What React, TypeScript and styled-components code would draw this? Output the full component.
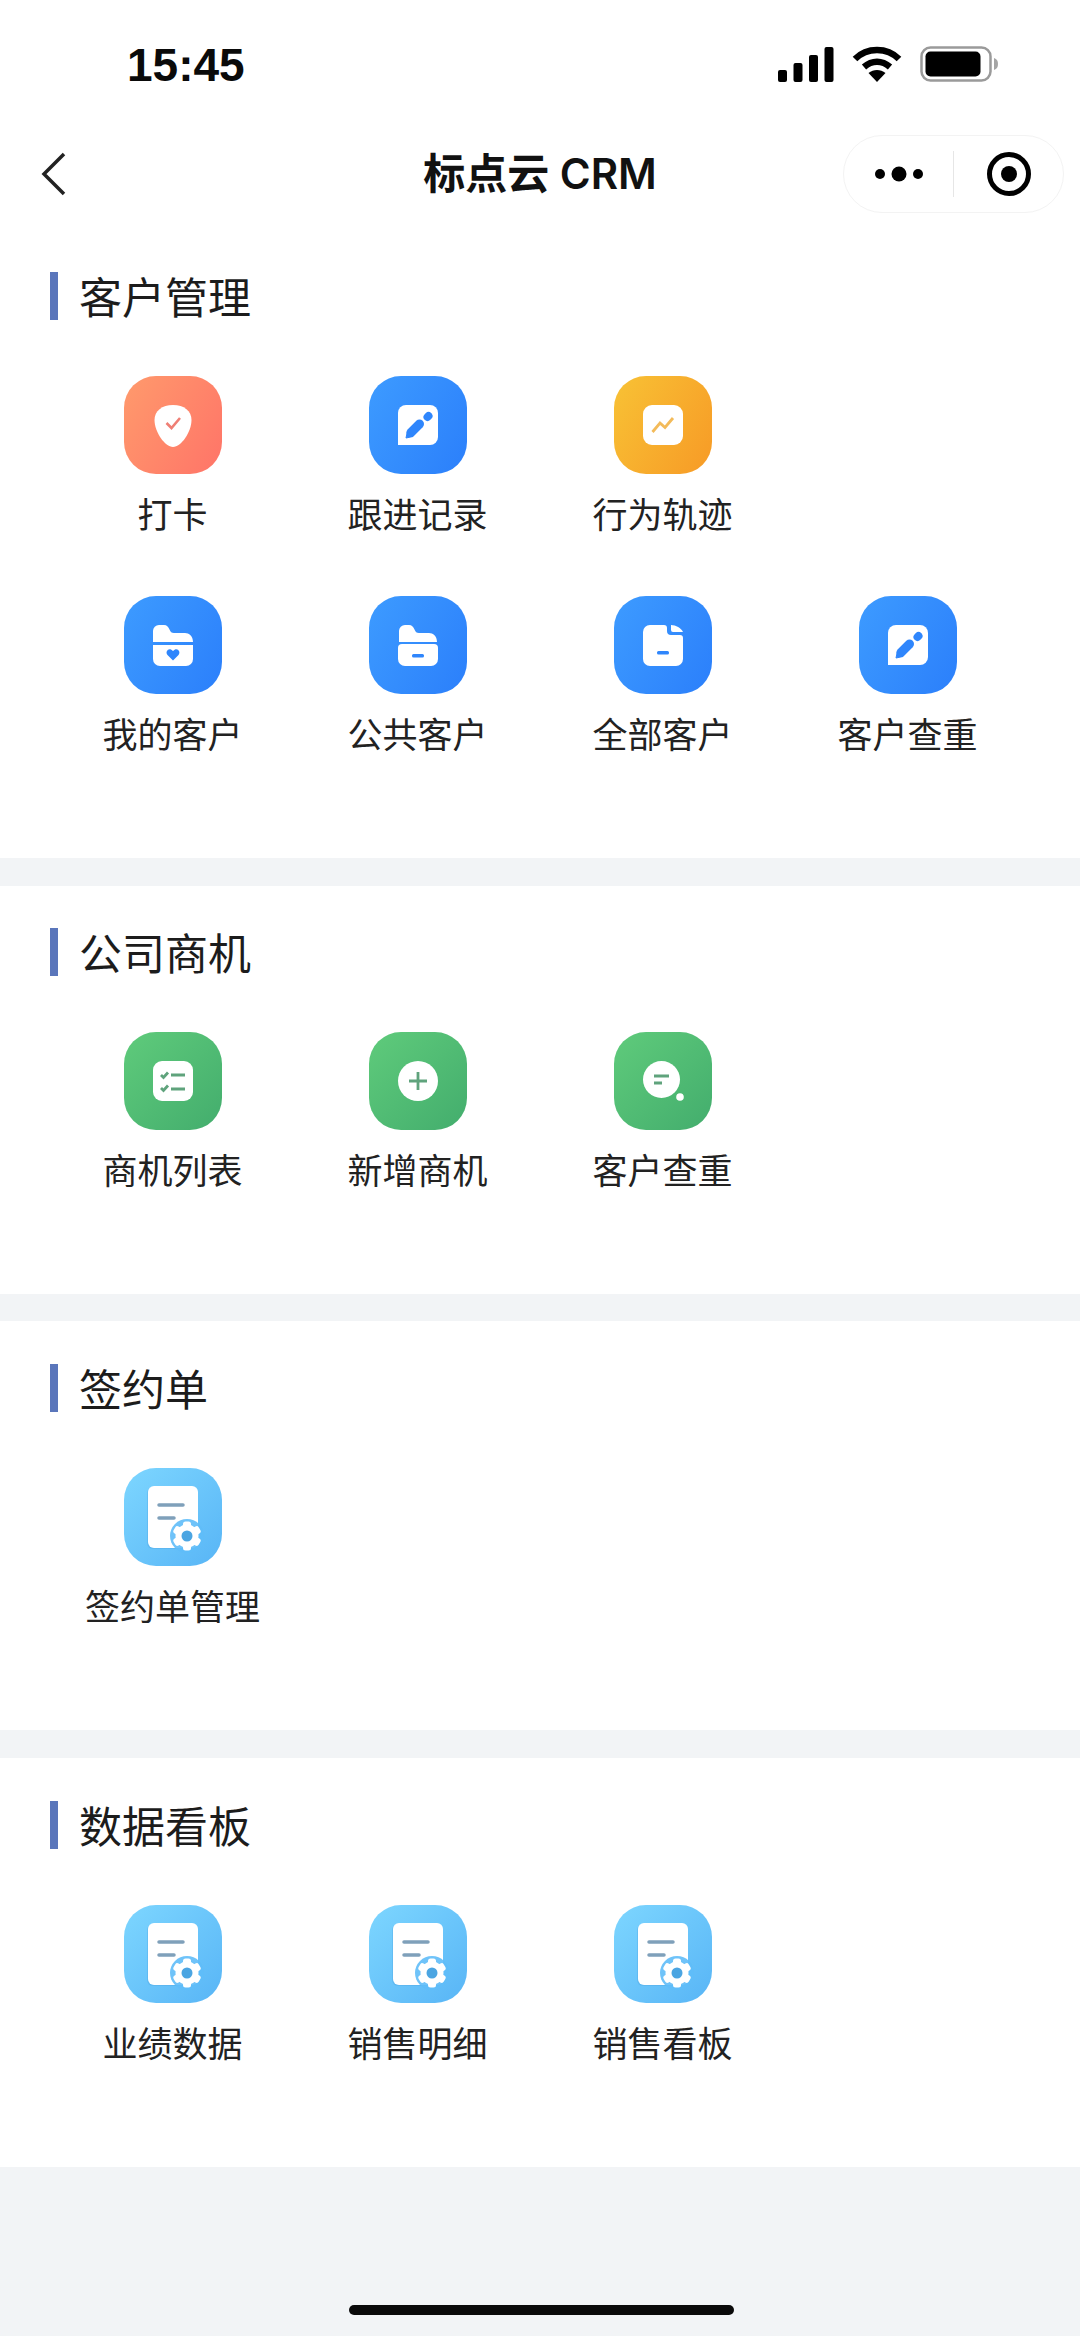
import React from "react";
import styled, { createGlobalStyle } from "styled-components";

const Global = createGlobalStyle`
  html, body { margin: 0; padding: 0; background: #f2f4f6; }
  body { font-family: "Liberation Sans", "Noto Sans CJK SC", sans-serif; }
`;

const Page = styled.div`
  position: relative;
  width: 1080px;
  min-height: 2336px;
  background: #f2f4f6;
  overflow: hidden;
`;

const Head = styled.header`
  background: #fff;
`;

const StatusBar = styled.div`
  height: 120px;
  display: flex;
  align-items: flex-start;
  justify-content: space-between;
  padding: 42px 82px 0 127px;
  box-sizing: border-box;
`;

const Clock = styled.span`
  font-size: 46px;
  line-height: 46px;
  font-weight: 700;
  color: #0a0a0a;
`;

const StatusIcons = styled.div`
  display: flex;
  align-items: center;
  gap: 18px;
  margin-top: 4px;
`;

const NavBar = styled.nav`
  height: 108px;
  display: grid;
  grid-template-columns: 1fr auto 1fr;
  align-items: center;
  padding: 0 16px 0 40px;
  box-sizing: border-box;
`;

const BackButton = styled.div`
  display: flex;
  align-items: center;
`;

const NavTitle = styled.h1`
  margin: 0 0 0 -24px;
  font-size: 42px;
  line-height: 56px;
  font-weight: 600;
  color: #111;
  font-family: "Inter", "Noto Sans CJK SC", sans-serif;
  white-space: nowrap;
`;

const Capsule = styled.div`
  justify-self: end;
  width: 221px;
  height: 78px;
  border-radius: 39px;
  border: 1px solid #f3f3f3;
  background: #fff;
  box-sizing: border-box;
  display: grid;
  grid-template-columns: 1fr 1px 1fr;
  align-items: center;
  justify-items: center;
`;

const CapsuleRule = styled.div`
  width: 1px;
  height: 46px;
  background: #e6e6e6;
`;

const Section = styled.section<{ $top: number }>`
  background: #fff;
  padding: ${(p) => p.$top}px 0 101px;
  margin-bottom: 27.5px;
`;

const Heading = styled.h2`
  margin: 0 0 56px 50px;
  height: 48px;
  border-left: 8px solid #5a76bb;
  padding-left: 21px;
  font-size: 43px;
  line-height: 46px;
  font-weight: 400;
  color: #1c1c1c;
  font-family: "Noto Sans CJK SC", sans-serif;
`;

const Grid = styled.div`
  display: grid;
  grid-template-columns: repeat(4, 245px);
  row-gap: 59px;
  padding-left: 50px;
`;

const Item = styled.div`
  display: flex;
  flex-direction: column;
  align-items: center;
  gap: 15px;
`;

const Tile = styled.div<{ $kind: Kind }>`
  width: 98px;
  height: 98px;
  border-radius: 32px;
  background: ${(p) => gradients[p.$kind]};
  svg { display: block; }
`;

const Label = styled.div`
  font-size: 35px;
  line-height: 48px;
  color: #222;
  white-space: nowrap;
  font-family: "Noto Sans CJK SC", sans-serif;
`;

const HomeBar = styled.div`
  position: absolute;
  left: 349px;
  top: 2305px;
  width: 385px;
  height: 10px;
  border-radius: 5px;
  background: #0a0a0a;
`;

type Kind = "red" | "blue" | "orange" | "green" | "sky";

const gradients: Record<Kind, string> = {
  red: "linear-gradient(120deg, #ff9a6c, #ff7468)",
  blue: "linear-gradient(120deg, #3d9bff, #2b7ffb)",
  orange: "linear-gradient(120deg, #f8c235, #f79a26)",
  green: "linear-gradient(135deg, #5fcb7b, #43ad6d)",
  sky: "linear-gradient(135deg, #7dd6ff, #58b5f6)",
};

const Doc = () => (
  <path d="M29 37a8 8 0 0 1 8-8h24a8 8 0 0 1 8 8v24a8 8 0 0 1-8 8H29z" fill="#fff" />
);

const Pencil = () => (
  <g stroke="#2f86fc" fill="none">
    <path d="M42 56.500L50.500 48" strokeWidth="9" strokeLinecap="round" />
    <path d="M37 62l1.500-7 5.500 5.500z" fill="#2f86fc" strokeWidth="1" />
    <path d="M58.500 41L59.500 40" strokeWidth="8" strokeLinecap="round" />
  </g>
);

const Gear = () => (
  <g>
    <circle cx="63" cy="68" r="17" fill="#5fbcf8" opacity="0.9" />
    {[0, 60, 120].map((a) => (
      <rect key={a} x="59" y="53.500" width="8" height="29" rx="2.500" fill="#fff" transform={`rotate(${a} 63 68)`} />
    ))}
    <circle cx="63" cy="68" r="11.500" fill="#fff" />
    <circle cx="63" cy="68" r="5.500" fill="#4ba5e2" />
  </g>
);

const glyphs: Record<string, React.ReactNode> = {
  shield: (
    <>
      <path d="M49 29C60 29 67.500 35 67.500 44C67.500 56 57 71 49 71C41 71 30.500 56 30.500 44C30.500 35 38 29 49 29z" fill="#fff" />
      <path d="M42.500 47l5 5 8.500-10" fill="none" stroke="#ef7f75" strokeWidth="2.600" />
    </>
  ),
  edit: (
    <>
      <Doc />
      <Pencil />
    </>
  ),
  trend: (
    <>
      <rect x="29" y="29" width="40" height="40" rx="9" fill="#fff" />
      <path d="M38.500 56l7.500-9 5 4.500 8-9.500" fill="none" stroke="#f3bb5a" strokeWidth="2.800" />
    </>
  ),
  folderHeart: (
    <>
      <path d="M29 46V35a6 6 0 0 1 6-6h5c3 0 4 1.500 5.500 4.500 1 2.500 2 3.500 4.500 3.500h11c4 0 8 3 8 9z" fill="#fff" />
      <path d="M29 49h40v14a7 7 0 0 1-7 7H36a7 7 0 0 1-7-7z" fill="#fff" />
      <path d="M49 64.500l-5.500-5.500c-2.500-3 .5-7 3.500-5.500l2 1.500 2-1.500c3-1.500 6 2.500 3.500 5.500z" fill="#2f86fc" />
    </>
  ),
  folderMinus: (
    <>
      <path d="M30 46V35a6 6 0 0 1 6-6h4c3 0 4 1.500 5.500 4.500 1 2.500 2 3.500 4.500 3.500h10c4 0 8 3 8 9z" fill="#fff" />
      <path d="M29 52a4 4 0 0 1 4-4h32a4 4 0 0 1 4 4v11a7 7 0 0 1-7 7H36a7 7 0 0 1-7-7z" fill="#fff" />
      <rect x="43" y="58" width="12" height="3.500" rx="1.500" fill="#2f86fc" />
    </>
  ),
  fileMinus: (
    <>
      <path d="M29 36a7 7 0 0 1 7-7h14c2 0 3 1 3 3v3a4 4 0 0 0 4 4h9c2 0 3 1 3 3v21a7 7 0 0 1-7 7H36a7 7 0 0 1-7-7z" fill="#fff" />
      <path d="M57 29c5 0 10 3 12 7H59a2 2 0 0 1-2-2z" fill="#fff" />
      <rect x="43" y="55" width="12" height="3.500" rx="1.500" fill="#2f86fc" />
    </>
  ),
  checklist: (
    <>
      <rect x="29" y="29" width="40" height="40" rx="9" fill="#fff" />
      <g fill="none" stroke="#5fa37c" strokeWidth="2.800">
        <path d="M37 43l2.500 2.500 4.500-5M37 56l2.500 2.500 4.500-5M47 43h14M47 57h14" />
      </g>
    </>
  ),
  plus: (
    <>
      <circle cx="49" cy="49" r="20" fill="#fff" />
      <path d="M49 40v18M40 49h18" stroke="#5fa37c" strokeWidth="2.800" fill="none" />
    </>
  ),
  chat: (
    <>
      <circle cx="47.500" cy="47.500" r="18.500" fill="#fff" />
      <circle cx="66" cy="65" r="3.800" fill="#fff" />
      <path d="M40 44h15M40 51h8" stroke="#5fa37c" strokeWidth="2.800" fill="none" />
    </>
  ),
  report: (
    <>
      <rect x="23" y="19" width="50" height="62" rx="6" fill="#3f97d8" opacity="0.25" />
      <rect x="24" y="18" width="50" height="62" rx="6" fill="#fff" />
      <path d="M35 37h24M35 50h15" stroke="#7fa0ba" strokeWidth="3.500" fill="none" strokeLinecap="round" />
      <Gear />
    </>
  ),
};

type Entry = { label: string; kind: Kind; glyph: string };

const groups: { title: string; top: number; items: Entry[] }[] = [
  {
    title: "客户管理",
    top: 44,
    items: [
      { label: "打卡", kind: "red", glyph: "shield" },
      { label: "跟进记录", kind: "blue", glyph: "edit" },
      { label: "行为轨迹", kind: "orange", glyph: "trend" },
      { label: "", kind: "blue", glyph: "" },
      { label: "我的客户", kind: "blue", glyph: "folderHeart" },
      { label: "公共客户", kind: "blue", glyph: "folderMinus" },
      { label: "全部客户", kind: "blue", glyph: "fileMinus" },
      { label: "客户查重", kind: "blue", glyph: "edit" },
    ],
  },
  {
    title: "公司商机",
    top: 42,
    items: [
      { label: "商机列表", kind: "green", glyph: "checklist" },
      { label: "新增商机", kind: "green", glyph: "plus" },
      { label: "客户查重", kind: "green", glyph: "chat" },
    ],
  },
  {
    title: "签约单",
    top: 43,
    items: [{ label: "签约单管理", kind: "sky", glyph: "report" }],
  },
  {
    title: "数据看板",
    top: 43,
    items: [
      { label: "业绩数据", kind: "sky", glyph: "report" },
      { label: "销售明细", kind: "sky", glyph: "report" },
      { label: "销售看板", kind: "sky", glyph: "report" },
    ],
  },
];

export default function App() {
  return (
    <Page>
      <Global />
      <Head>
        <StatusBar>
          <Clock>15:45</Clock>
          <StatusIcons>
            <svg width="56" height="35" viewBox="0 0 56 35">
              <rect x="0" y="23" width="9" height="12" rx="2" />
              <rect x="15.500" y="16" width="9" height="19" rx="2" />
              <rect x="31" y="8" width="9" height="27" rx="2" />
              <rect x="46.500" y="0" width="9" height="35" rx="2" />
            </svg>
            <svg width="50" height="36" viewBox="0 0 50 36" fill="none" stroke="#000" strokeWidth="6.500">
              <path d="M3 13C15 1 35 1 47 13" />
              <path d="M12 21c8-7 18-7 26 0" />
              <path d="M25 36l-8.500-9c5-4 12-4 17 0z" fill="#000" stroke="none" />
            </svg>
            <svg width="78" height="36" viewBox="0 0 78 36">
              <rect x="1.500" y="1.500" width="69" height="33" rx="9" fill="none" stroke="#9a9a9a" strokeWidth="2.500" />
              <rect x="5.500" y="5.500" width="55" height="25" rx="5" fill="#000" />
              <path d="M74 12c3 1 4 3 4 6s-1 5-4 6z" fill="#a5a5a5" />
            </svg>
          </StatusIcons>
        </StatusBar>
        <NavBar>
          <BackButton>
            <svg width="28" height="44" viewBox="0 0 28 44" fill="none" stroke="#222" strokeWidth="3.500">
              <path d="M24 2L4 22l20 20" />
            </svg>
          </BackButton>
          <NavTitle>标点云 CRM</NavTitle>
          <Capsule>
            <svg width="50" height="18" viewBox="0 0 50 18" fill="#000">
              <circle cx="6" cy="9" r="5" />
              <circle cx="25" cy="9" r="7.500" />
              <circle cx="44" cy="9" r="5" />
            </svg>
            <CapsuleRule />
            <svg width="46" height="46" viewBox="0 0 46 46">
              <circle cx="23" cy="23" r="19.500" fill="none" stroke="#000" strokeWidth="5" />
              <circle cx="23" cy="23" r="8" fill="#000" />
            </svg>
          </Capsule>
        </NavBar>
      </Head>
      {groups.map((g) => (
        <Section key={g.title} $top={g.top}>
          <Heading>{g.title}</Heading>
          <Grid>
            {g.items.map((it, i) =>
              it.label ? (
                <Item key={i}>
                  <Tile $kind={it.kind}>
                    <svg width="98" height="98" viewBox="0 0 98 98">
                      {glyphs[it.glyph]}
                    </svg>
                  </Tile>
                  <Label>{it.label}</Label>
                </Item>
              ) : (
                <div key={i} />
              )
            )}
          </Grid>
        </Section>
      ))}
      <HomeBar />
    </Page>
  );
}
